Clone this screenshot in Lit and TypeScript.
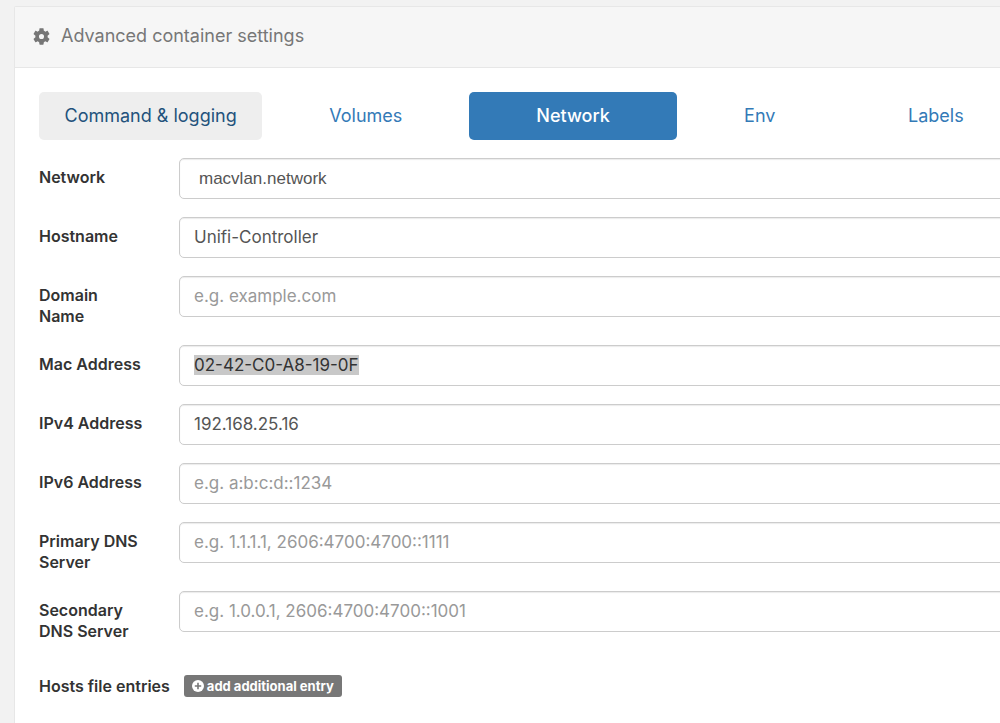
import { LitElement, html, css, nothing } from "lit";
import { customElement, query, state } from "lit/decorators.js";
import { classMap } from "lit/directives/class-map.js";

interface Field {
  id: string;
  label: string;
  value?: string;
  hint?: string;
}

const TABS = ["Command & logging", "Volumes", "Network", "Env", "Labels"];

const FIELDS: Field[] = [
  { id: "hostname", label: "Hostname", value: "Unifi-Controller" },
  { id: "domain", label: "Domain Name", hint: "e.g. example.com" },
  { id: "mac", label: "Mac Address", value: "02-42-C0-A8-19-0F" },
  { id: "ipv4", label: "IPv4 Address", value: "192.168.25.16" },
  { id: "ipv6", label: "IPv6 Address", hint: "e.g. a:b:c:d::1234" },
  { id: "dns1", label: "Primary DNS Server", hint: "e.g. 1.1.1.1, 2606:4700:4700::1111" },
  { id: "dns2", label: "Secondary DNS Server", hint: "e.g. 1.0.0.1, 2606:4700:4700::1001" },
];

@customElement("app-root")
export class AppRoot extends LitElement {
  static styles = css`
    :host {
      display: block;
      box-sizing: border-box;
      min-height: 100vh;
      padding: 6px 0 0 14px;
      overflow: hidden;
      background: #f2f2f2;
      color: #333;
      font-family: Inter, "Open Sans", sans-serif;
      font-size: 17px;
    }
    .panel {
      box-sizing: border-box;
      min-height: calc(100vh - 6px);
      margin-right: -54px;
      background: #fff;
      border: 1px solid #e7e7e7;
      border-bottom: 0;
      border-radius: 2px 0 0 0;
    }
    .head {
      display: flex;
      align-items: center;
      gap: 11px;
      padding: 17px 18px 19px;
      background: #f6f6f6;
      border-bottom: 1px solid #e7e7e7;
      color: #777;
    }
    .title {
      margin: 0;
      font-size: 18px;
      font-weight: 400;
      line-height: 24px;
    }
    .gear {
      width: 17px;
      height: 17px;
      fill: #767676;
    }
    .body {
      padding: 24px;
    }
    .tabs {
      display: grid;
      grid-template-columns: 223fr 207fr 207fr 166fr 186fr;
      margin-bottom: 18px;
    }
    .tab {
      padding: 12px 0;
      border-radius: 5px;
      color: #337ab7;
      font-size: 18px;
      line-height: 24px;
      text-align: center;
      text-decoration: none;
    }
    .tab:first-child {
      background: #eee;
      color: #23527c;
    }
    .tab.active {
      background: #337ab7;
      color: #fff;
      font-weight: 500;
    }
    .form {
      display: grid;
      gap: 18px;
    }
    .row {
      display: grid;
      grid-template-columns: 140px 1fr;
      align-items: start;
    }
    .label {
      padding: 9px 36px 0 0;
      font-size: 16px;
      font-weight: 600;
      line-height: 21px;
    }
    .control {
      box-sizing: border-box;
      width: 100%;
      height: 41px;
      margin: 0;
      padding: 0 14px 2px;
      border: 1px solid #ccc;
      border-radius: 5px;
      outline: none;
      background: #fff;
      box-shadow: inset 0 1px 1px rgba(0, 0, 0, 0.08);
      color: #555;
      font-family: inherit;
      font-size: 17px;
    }
    .control::placeholder {
      color: #999;
      opacity: 1;
    }
    .control::selection {
      background: #c8c8c8;
      color: #333;
    }
    .select {
      appearance: none;
      padding: 0 19px;
      font-family: "Liberation Sans", sans-serif;
      font-size: 17px;
    }
    .hosts {
      display: flex;
      align-items: center;
      gap: 14px;
      padding-top: 15px;
    }
    .caption {
      font-size: 16px;
      font-weight: 600;
      line-height: 21px;
    }
    .add {
      display: flex;
      align-items: center;
      gap: 3px;
      padding: 2px 8px;
      border: 0;
      border-radius: 3px;
      background: #777;
      color: #fff;
      font-family: inherit;
      font-size: 13px;
      font-weight: 700;
      line-height: 18px;
    }
    .plus {
      width: 12px;
      height: 12px;
    }
  `;

  @state() private active = "Network";
  @query("#mac") private mac!: HTMLInputElement;

  firstUpdated() {
    this.mac.focus({ preventScroll: true });
    this.mac.select();
  }

  private pick(event: Event, tab: string) {
    event.preventDefault();
    this.active = tab;
  }

  render() {
    return html`
      <section class="panel">
        <header class="head">
          <svg class="gear" viewBox="2 2 20 20" aria-hidden="true">
            <path
              d="M19.140 12.940c.040-.300.060-.610.060-.940 0-.320-.020-.640-.070-.940l2.030-1.580c.180-.140.230-.410.120-.610l-1.920-3.320c-.120-.220-.370-.290-.590-.220l-2.390.960c-.500-.380-1.030-.700-1.620-.940l-.360-2.540c-.040-.240-.240-.410-.480-.410h-3.840c-.240 0-.430.170-.470.410l-.360 2.540c-.590.240-1.130.570-1.620.940l-2.390-.960c-.220-.080-.470 0-.590.220L2.740 8.870c-.120.210-.080.470.120.610l2.030 1.580c-.050.300-.090.630-.090.940s.020.640.070.940l-2.030 1.580c-.180.140-.230.410-.120.610l1.920 3.320c.120.220.370.290.590.220l2.390-.960c.500.380 1.030.700 1.620.940l.360 2.540c.050.240.240.410.480.410h3.840c.240 0 .440-.170.470-.410l.360-2.540c.590-.240 1.130-.560 1.620-.940l2.390.960c.220.080.470 0 .590-.220l1.920-3.320c.120-.220.070-.470-.120-.610l-2.010-1.580zM12 15a3 3 0 1 1 0-6 3 3 0 0 1 0 6z"
            />
          </svg>
          <h1 class="title">Advanced container settings</h1>
        </header>
        <div class="body">
          <nav class="tabs">
            ${TABS.map(
              (tab) => html`<a
                class=${classMap({ tab: true, active: tab === this.active })}
                href="#"
                @click=${(e: Event) => this.pick(e, tab)}
                >${tab}</a
              >`
            )}
          </nav>
          <form class="form">
            <div class="row">
              <label class="label" for="network">Network</label>
              <select class="control select" id="network">
                <option>macvlan.network</option>
              </select>
            </div>
            ${FIELDS.map(
              (f) => html`<div class="row">
                <label class="label" for=${f.id}>${f.label}</label>
                <input
                  class="control"
                  id=${f.id}
                  type="text"
                  spellcheck="false"
                  .value=${f.value ?? ""}
                  placeholder=${f.hint ?? nothing}
                />
              </div>`
            )}
            <div class="hosts">
              <span class="caption">Hosts file entries</span>
              <button class="add" type="button">
                <svg class="plus" viewBox="0 0 12 12" aria-hidden="true">
                  <circle cx="6" cy="6" r="6" fill="#fff" />
                  <path d="M6 2.800v6.400M2.800 6h6.400" stroke="#777" stroke-width="1.600" />
                </svg>
                add additional entry
              </button>
            </div>
          </form>
        </div>
      </section>
    `;
  }
}
